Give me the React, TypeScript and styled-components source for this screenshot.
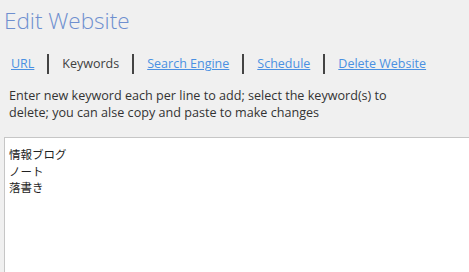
import React from 'react'
import styled, { createGlobalStyle } from 'styled-components'

const Global = createGlobalStyle`
  html, body {
    margin: 0;
    background: #f0f0f0;
    overflow: hidden;
  }
  body {
    font-family: "Open Sans", "Noto Sans", sans-serif;
  }
`

const Page = styled.div`
  width: 469px;
  height: 272px;
  display: flex;
  flex-direction: column;
  overflow: hidden;
`

const Title = styled.h1`
  margin: 7px 0 0 4px;
  font-family: "Open Sans", sans-serif;
  font-weight: 300;
  font-size: 22.5px;
  line-height: 28px;
  color: #6e8fcf;
`

const Tabs = styled.nav`
  display: flex;
  align-items: center;
  margin: 19px 0 0 11px;
  height: 20px;
`

const Tab = styled.a<{ $active?: boolean }>`
  font-size: 12.5px;
  line-height: 20px;
  color: ${(p) => (p.$active ? '#404040' : '#4a90e2')};
  text-decoration: ${(p) => (p.$active ? 'none' : 'underline')};
  cursor: pointer;
`

const Sep = styled.span`
  width: 2px;
  height: 20px;
  margin: 0 13px;
  background: #444;
`

const Hint = styled.p`
  margin: 13px 0 0 9px;
  font-size: 12.6px;
  line-height: 17px;
  color: #333;
`

const Box = styled.textarea`
  margin: 16px 0 0 4px;
  flex: 1;
  min-height: 140px;
  width: 480px;
  box-sizing: border-box;
  border: 1px solid #c6c6c6;
  border-right: none;
  border-bottom: none;
  background: #fff;
  padding: 8px 4px;
  font-family: "Noto Sans CJK JP", sans-serif;
  font-size: 11.5px;
  line-height: 16.5px;
  color: #222;
  resize: none;
  outline: none;
`

const tabs = ['URL', 'Keywords', 'Search Engine', 'Schedule', 'Delete Website']

export default function App() {
  return (
    <Page>
      <Global />
      <Title>Edit Website</Title>
      <Tabs>
        {tabs.map((t, i) => (
          <React.Fragment key={t}>
            {i > 0 && <Sep />}
            <Tab $active={t === 'Keywords'}>{t}</Tab>
          </React.Fragment>
        ))}
      </Tabs>
      <Hint>
        Enter new keyword each per line to add; select the keyword(s) to
        <br />
        delete; you can alse copy and paste to make changes
      </Hint>
      <Box defaultValue={'情報ブログ\nノート\n落書き'} />
    </Page>
  )
}
